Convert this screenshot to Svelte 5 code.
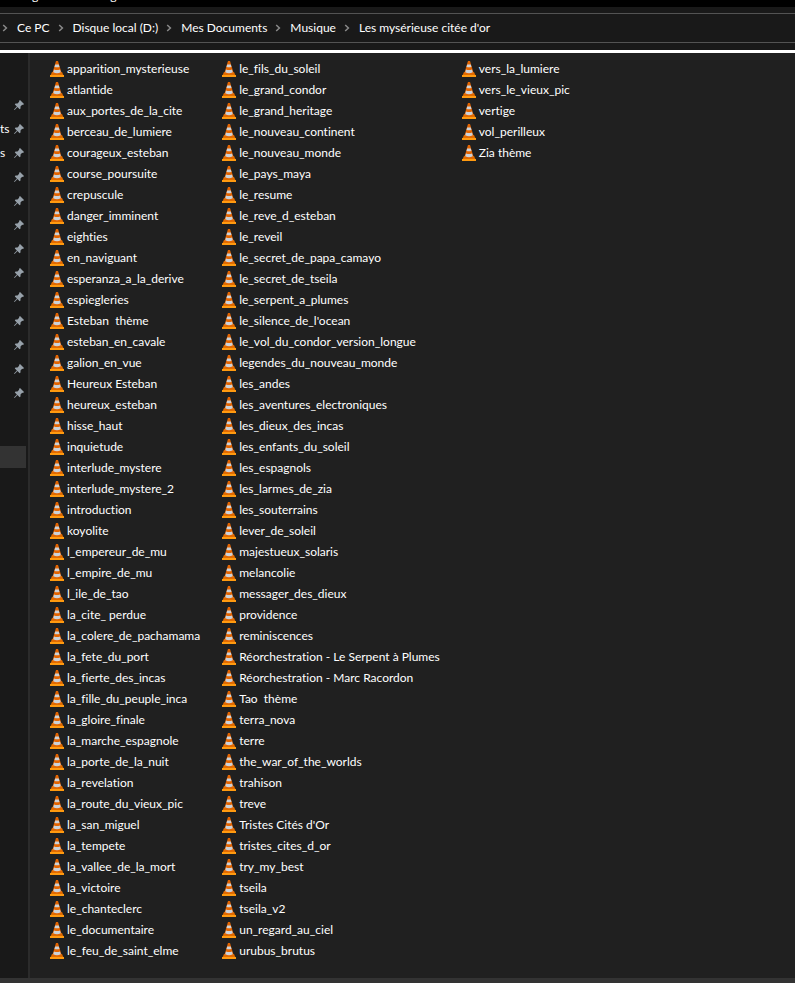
<script lang="ts">
	const path = ['Ce PC', 'Disque local (D:)', 'Mes Documents', 'Musique', "Les mysérieuse citée d'or"];

	// the pane is narrow, only the end of a shortcut's name is left
	const pinned = ['', 'ts', 's', '', '', '', '', '', '', '', '', '', ''];

	const columns = [
		[
			'apparition_mysterieuse',
			'atlantide',
			'aux_portes_de_la_cite',
			'berceau_de_lumiere',
			'courageux_esteban',
			'course_poursuite',
			'crepuscule',
			'danger_imminent',
			'eighties',
			'en_naviguant',
			'esperanza_a_la_derive',
			'espiegleries',
			'Esteban  thème',
			'esteban_en_cavale',
			'galion_en_vue',
			'Heureux Esteban',
			'heureux_esteban',
			'hisse_haut',
			'inquietude',
			'interlude_mystere',
			'interlude_mystere_2',
			'introduction',
			'koyolite',
			'l_empereur_de_mu',
			'l_empire_de_mu',
			'l_ile_de_tao',
			'la_cite_ perdue',
			'la_colere_de_pachamama',
			'la_fete_du_port',
			'la_fierte_des_incas',
			'la_fille_du_peuple_inca',
			'la_gloire_finale',
			'la_marche_espagnole',
			'la_porte_de_la_nuit',
			'la_revelation',
			'la_route_du_vieux_pic',
			'la_san_miguel',
			'la_tempete',
			'la_vallee_de_la_mort',
			'la_victoire',
			'le_chanteclerc',
			'le_documentaire',
			'le_feu_de_saint_elme'
		],
		[
			'le_fils_du_soleil',
			'le_grand_condor',
			'le_grand_heritage',
			'le_nouveau_continent',
			'le_nouveau_monde',
			'le_pays_maya',
			'le_resume',
			'le_reve_d_esteban',
			'le_reveil',
			'le_secret_de_papa_camayo',
			'le_secret_de_tseila',
			'le_serpent_a_plumes',
			"le_silence_de_l'ocean",
			'le_vol_du_condor_version_longue',
			'legendes_du_nouveau_monde',
			'les_andes',
			'les_aventures_electroniques',
			'les_dieux_des_incas',
			'les_enfants_du_soleil',
			'les_espagnols',
			'les_larmes_de_zia',
			'les_souterrains',
			'lever_de_soleil',
			'majestueux_solaris',
			'melancolie',
			'messager_des_dieux',
			'providence',
			'reminiscences',
			'Réorchestration - Le Serpent à Plumes',
			'Réorchestration - Marc Racordon',
			'Tao  thème',
			'terra_nova',
			'terre',
			'the_war_of_the_worlds',
			'trahison',
			'treve',
			"Tristes Cités d'Or",
			'tristes_cites_d_or',
			'try_my_best',
			'tseila',
			'tseila_v2',
			'un_regard_au_ciel',
			'urubus_brutus'
		],
		['vers_la_lumiere', 'vers_le_vieux_pic', 'vertige', 'vol_perilleux', 'Zia thème']
	];
</script>

<div class="window">
	<header class="title">
		<span>g</span>
		<span>g</span>
	</header>

	<nav class="address">
		{#each path as folder}
			<svg class="chevron" viewBox="0 0 6 8"><path d="M1.2 1 4.4 4 1.2 7" /></svg>
			<a href="#folder">{folder}</a>
		{/each}
	</nav>

	<div class="body">
		<aside>
			<ul class="pins">
				{#each pinned as name}
					<li>
						<span>{name}</span>
						<svg class="pin" viewBox="0 0 10 10">
							<path
								d="M6 0 10 4 9 5 8.2 4.8 6.5 6.5 6.5 8.5 5.6 9.2 3.5 7.1.6 10 0 9.4 2.9 6.5.8 4.4 1.5 3.5 3.5 3.5 5.2 1.8 5 1Z"
							/>
						</svg>
					</li>
				{/each}
			</ul>
			<div class="current"></div>
		</aside>

		<main>
			{#each columns as files}
				<ul class="files">
					{#each files as file}
						<li>
							<svg class="cone" viewBox="0 0 14 16">
								<path class="base" d="M2 11H12L14 15.5H0Z" />
								<path class="edge" d="M0 14H14V16H0Z" />
								<path class="trunk" d="M6 0H8L11.6 12Q7 14.6 2.4 12Z" />
								<path class="stripe" d="M5.2 3.4H8.8L9.5 5.9Q7 6.8 4.5 5.9Z" />
								<path class="stripe" d="M4 8.6Q7 9.6 10 8.6L10.8 11.2Q7 13.2 3.2 11.2Z" />
							</svg>
							<span>{file}</span>
						</li>
					{/each}
				</ul>
			{/each}
		</main>
	</div>

	<footer></footer>
</div>

<style>
	:global(body) {
		background: #202020;
	}
	.window {
		display: flex;
		flex-direction: column;
		min-height: 100vh;
		background: #191919;
		color: #fff;
		font: 12px/16px 'Segoe UI', Lato, 'Open Sans', sans-serif;
		font-variant-ligatures: none;
	}
	.title {
		display: flex;
		align-items: flex-end;
		gap: 72px;
		box-sizing: border-box;
		height: 7px;
		overflow: hidden;
		padding: 0 0 3px 32px;
		background: #000;
	}
	.address {
		display: flex;
		align-items: center;
		height: 28px;
		margin: 6px 0 7px;
		border: solid #535353;
		border-width: 1px 0;
	}
	.address a {
		color: inherit;
		text-decoration: none;
		white-space: nowrap;
		margin: 0 6px 0 9px;
	}
	.chevron {
		flex: none;
		width: 6px;
		height: 8px;
		margin-left: 2px;
		fill: none;
		stroke: #8a8a8a;
		stroke-width: 1.5;
	}
	.body {
		display: flex;
		flex: 1;
		border-top: 3px solid #fff;
	}
	ul {
		list-style: none;
		margin: 0;
		padding: 0;
	}
	aside {
		flex: none;
		width: 28px;
		padding-top: 40px;
		border-right: 2px solid #2b2b2b;
	}
	.pins li {
		display: flex;
		align-items: center;
		justify-content: space-between;
		height: 24px;
		padding-right: 4px;
	}
	.pin {
		flex: none;
		width: 10px;
		height: 10px;
		fill: #97a1aa;
	}
	.current {
		height: 22px;
		margin: 41px 2px 0 0;
		background: #333;
	}
	main {
		display: flex;
		flex: 1;
		align-items: flex-start;
		gap: 22px;
		padding: 5px 20px 17px;
		background: #202020;
	}
	.files li {
		display: flex;
		align-items: flex-start;
		gap: 3px;
		height: 18px;
		padding-top: 3px;
		white-space: pre;
	}
	.cone {
		flex: none;
		width: 14px;
		height: 16px;
	}
	.base {
		fill: #e06c00;
	}
	.edge {
		fill: #ff9a10;
	}
	.trunk {
		fill: #e46400;
	}
	.stripe {
		fill: #ccd2d8;
	}
	footer {
		height: 5px;
		background: #333;
	}
</style>
